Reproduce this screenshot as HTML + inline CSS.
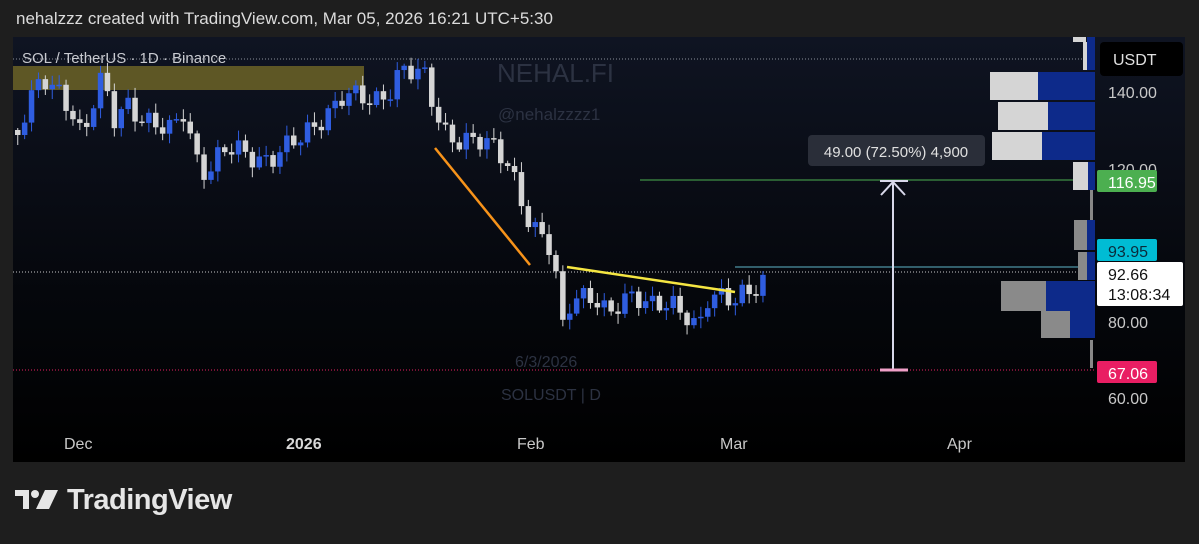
<!DOCTYPE html>
<html><head><meta charset="utf-8"><style>
body{margin:0;width:1199px;height:544px;background:#1e1e1e;font-family:"Liberation Sans",sans-serif;overflow:hidden;position:relative}
.hdr{position:absolute;left:16px;top:9px;color:#dcdcdc;font-size:17px}
#chart{position:absolute;left:13px;top:37px;width:1172px;height:425px;background:linear-gradient(#0f1422,#05070c 60%,#000)}
.logo{position:absolute;left:15px;top:484px;color:#e6e6e6;font-size:29px;font-weight:bold;letter-spacing:-0.5px}
</style></head><body>
<div class="hdr">nehalzzz created with TradingView.com, Mar 05, 2026 16:21 UTC+5:30</div>
<svg id="chart" width="1172" height="425" viewBox="13 37 1172 425" xmlns="http://www.w3.org/2000/svg" font-family="Liberation Sans, sans-serif">
<rect x="13" y="66" width="351" height="24" fill="#5e5725"/>
<line x1="13" y1="59" x2="1095" y2="59" stroke="#8a8f9a" stroke-dasharray="1,2"/>
<line x1="13" y1="272" x2="1095" y2="272" stroke="#c8c8c8" stroke-dasharray="1,2"/>
<line x1="13" y1="370" x2="1095" y2="370" stroke="#e91e63" stroke-dasharray="1,2"/>
<line x1="640" y1="180" x2="1095" y2="180" stroke="#4caf50"/>
<line x1="735" y1="267" x2="1095" y2="267" stroke="#5fb5c8"/>
<text x="22" y="63" fill="#c8cad0" font-size="15">SOL / TetherUS · 1D · Binance</text>
<text x="497" y="82" fill="#2c3242" font-size="26">NEHAL.FI</text>
<text x="498" y="120" fill="#2c3242" font-size="17">@nehalzzzz1</text>
<text x="515" y="367" fill="#2c3242" font-size="16">6/3/2026</text>
<text x="501" y="400" fill="#2c3242" font-size="16">SOLUSDT | D</text>
<g id="candles"></g>
<line x1="435" y1="148" x2="530" y2="265" stroke="#f7931a" stroke-width="2.5"/>
<line x1="567" y1="267" x2="735" y2="292" stroke="#f5e642" stroke-width="2.5"/>
<line x1="893" y1="182" x2="893" y2="370" stroke="#d8d8ea" stroke-width="2"/>
<path d="M881 195 L893 182 L905 195" stroke="#d8d8ea" stroke-width="2" fill="none"/>
<line x1="880" y1="181" x2="908" y2="181" stroke="#d8d8ea" stroke-width="2"/>
<line x1="880" y1="370" x2="908" y2="370" stroke="#f0a0c8" stroke-width="3"/>
<rect x="808" y="135" width="177" height="31" rx="4" fill="#2a2e39"/>
<text x="896" y="157" fill="#e0e0e0" font-size="15" text-anchor="middle">49.00 (72.50%) 4,900</text>
<rect x="1073" y="37" width="13" height="5" fill="#d5d5d5"/><rect x="1083" y="42" width="4" height="28" fill="#d5d5d5"/><rect x="1087" y="37" width="8" height="33" fill="#0d2a8a"/>
<rect x="990" y="72" width="48" height="28" fill="#d5d5d5"/><rect x="1038" y="72" width="57" height="28" fill="#0d2a8a"/>
<rect x="998" y="102" width="50" height="28" fill="#d5d5d5"/><rect x="1048" y="102" width="47" height="28" fill="#0d2a8a"/>
<rect x="992" y="132" width="50" height="28" fill="#d5d5d5"/><rect x="1042" y="132" width="53" height="28" fill="#0d2a8a"/>
<rect x="1073" y="162" width="15" height="28" fill="#d5d5d5"/><rect x="1088" y="162" width="7" height="28" fill="#0d2a8a"/>
<rect x="1090" y="190" width="3" height="30" fill="#888"/>
<rect x="1074" y="220" width="13" height="30" fill="#8a8a8a"/><rect x="1087" y="220" width="8" height="30" fill="#0d2a8a"/>
<rect x="1078" y="252" width="9" height="28" fill="#8a8a8a"/><rect x="1087" y="252" width="8" height="28" fill="#0d2a8a"/>
<rect x="1001" y="281" width="45" height="30" fill="#8a8a8a"/><rect x="1046" y="281" width="49" height="30" fill="#0d2a8a"/>
<rect x="1041" y="311" width="29" height="27" fill="#8a8a8a"/><rect x="1070" y="311" width="25" height="27" fill="#0d2a8a"/>
<rect x="1090" y="340" width="3" height="28" fill="#888"/>
<rect x="1100" y="42" width="83" height="34" rx="4" fill="#000"/>
<text x="1113" y="65" fill="#e0e0e0" font-size="16">USDT</text>
<text x="1108" y="98" fill="#c8c8c8" font-size="16">140.00</text>
<text x="1108" y="175" fill="#c8c8c8" font-size="16">120.00</text>
<rect x="1097" y="170" width="60" height="22" rx="2" fill="#4caf50"/><text x="1108" y="188" fill="#fff" font-size="16">116.95</text>
<rect x="1097" y="239" width="60" height="22" rx="2" fill="#00bcd4"/><text x="1108" y="257" fill="#0a2a3a" font-size="16">93.95</text>
<rect x="1097" y="262" width="86" height="44" rx="2" fill="#fff"/><text x="1108" y="280" fill="#111" font-size="16">92.66</text><text x="1108" y="300" fill="#111" font-size="16">13:08:34</text>
<text x="1108" y="328" fill="#c8c8c8" font-size="16">80.00</text>
<rect x="1097" y="361" width="60" height="22" rx="2" fill="#e91e63"/><text x="1108" y="379" fill="#fff" font-size="16">67.06</text>
<text x="1108" y="404" fill="#c8c8c8" font-size="16">60.00</text>
<text x="64" y="449" fill="#c8c8c8" font-size="16">Dec</text>
<text x="286" y="449" fill="#d8d8d8" font-size="16" font-weight="bold">2026</text>
<text x="517" y="449" fill="#c8c8c8" font-size="16">Feb</text>
<text x="720" y="449" fill="#c8c8c8" font-size="16">Mar</text>
<text x="947" y="449" fill="#c8c8c8" font-size="16">Apr</text>
</svg>
<div class="logo"><svg width="44" height="24" viewBox="0 0 44 24" style="vertical-align:-2px;margin-right:8px"><path d="M0 3h14v19H8V9H0z" fill="#e6e6e6"/><circle cx="20" cy="7" r="4" fill="#e6e6e6"/><path d="M30 3h13L34 22H21z" fill="#e6e6e6"/></svg>TradingView</div>
<script>
(function(){
var A=[[15,130],[25,100],[40,82],[55,95],[70,110],[80,135],[92,95],[100,78],[110,125],[125,105],[140,115],[155,125],[170,135],[180,112],[195,160],[205,170],[220,150],[240,155],[260,158],[280,150],[300,140],[320,115],[340,95],[355,100],[370,103],[385,90],[398,68],[410,73],[422,80],[432,110],[442,130],[460,140],[480,145],[495,150],[505,160],[515,185],[522,210],[530,232],[545,245],[552,270],[560,325],[567,300],[575,292],[590,298],[605,320],[620,300],[632,290],[650,305],[670,310],[685,315],[695,325],[705,295],[720,300],[732,305],[745,290],[758,280],[766,274]];
function f(x){for(var i=0;i<A.length-1;i++){if(x<=A[i+1][0]){var t=(x-A[i][0])/(A[i+1][0]-A[i][0]);return A[i][1]+t*(A[i+1][1]-A[i][1]);}}return A[A.length-1][1];}
var s='',prev=f(15);
for(var i=0;;i++){var x=15+i*6.9;if(x>766)break;
var c=f(x)+Math.sin(i*1.9)*10+Math.cos(i*0.7)*5;var o=prev;prev=c;
var up=c<o;var col=up?'#2f5de0':'#d5d5d5';
var bt=Math.min(o,c),bb=Math.max(o,c);if(bb-bt<1.5)bb=bt+1.5;
var hw=bt-2-Math.abs(Math.sin(i*2.3))*8,lw=bb+2+Math.abs(Math.cos(i*1.3))*8;
s+='<line x1="'+(x+2.75)+'" y1="'+hw+'" x2="'+(x+2.75)+'" y2="'+lw+'" stroke="'+col+'" stroke-width="1"/>';
s+='<rect x="'+x+'" y="'+bt+'" width="5.5" height="'+(bb-bt)+'" fill="'+col+'"/>';}
document.getElementById('candles').innerHTML=s;
})();
</script>
</body></html>
